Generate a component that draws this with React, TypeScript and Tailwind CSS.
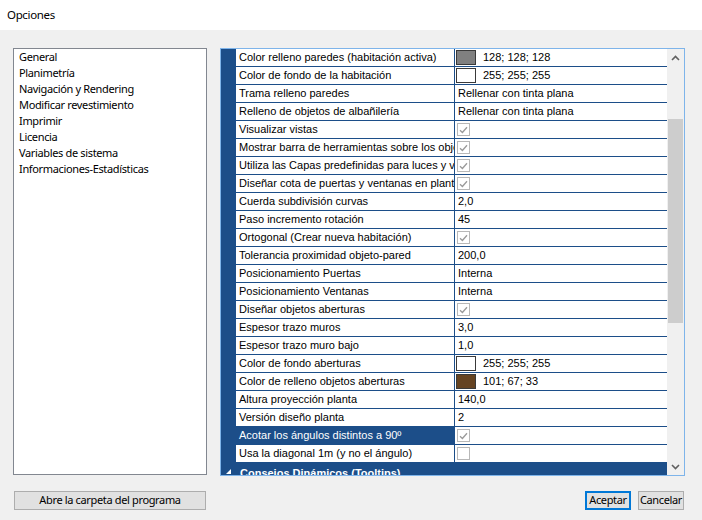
import React from "react";

type Row =
  | { name: string; kind: "text"; value: string }
  | { name: string; kind: "color"; value: string; color: string }
  | { name: string; kind: "check"; checked: boolean };

const rows: (Row & { selected?: boolean })[] = [
  { name: "Color relleno paredes (habitación activa)", kind: "color", value: "128; 128; 128", color: "#808080" },
  { name: "Color de fondo de la habitación", kind: "color", value: "255; 255; 255", color: "#ffffff" },
  { name: "Trama relleno paredes", kind: "text", value: "Rellenar con tinta plana" },
  { name: "Relleno de objetos de albañilería", kind: "text", value: "Rellenar con tinta plana" },
  { name: "Visualizar vistas", kind: "check", checked: true },
  { name: "Mostrar barra de herramientas sobre los objetos", kind: "check", checked: true },
  { name: "Utiliza las Capas predefinidas para luces y vistas", kind: "check", checked: true },
  { name: "Diseñar cota de puertas y ventanas en planta", kind: "check", checked: true },
  { name: "Cuerda subdivisión curvas", kind: "text", value: "2,0" },
  { name: "Paso incremento rotación", kind: "text", value: "45" },
  { name: "Ortogonal (Crear nueva habitación)", kind: "check", checked: true },
  { name: "Tolerancia proximidad objeto-pared", kind: "text", value: "200,0" },
  { name: "Posicionamiento Puertas", kind: "text", value: "Interna" },
  { name: "Posicionamiento Ventanas", kind: "text", value: "Interna" },
  { name: "Diseñar objetos aberturas", kind: "check", checked: true },
  { name: "Espesor trazo muros", kind: "text", value: "3,0" },
  { name: "Espesor trazo muro bajo", kind: "text", value: "1,0" },
  { name: "Color de fondo aberturas", kind: "color", value: "255; 255; 255", color: "#ffffff" },
  { name: "Color de relleno objetos aberturas", kind: "color", value: "101; 67; 33", color: "#654321" },
  { name: "Altura proyección planta", kind: "text", value: "140,0" },
  { name: "Versión diseño planta", kind: "text", value: "2" },
  { name: "Acotar los ángulos distintos a 90º", kind: "check", checked: true, selected: true },
  { name: "Usa la diagonal 1m (y no el ángulo)", kind: "check", checked: false },
];

const menu = [
  "General",
  "Planimetría",
  "Navigación y Rendering",
  "Modificar revestimiento",
  "Imprimir",
  "Licencia",
  "Variables de sistema",
  "Informaciones-Estadísticas",
];

function Check({ checked }: { checked: boolean }) {
  return (
    <div className="ml-[2px] w-[13px] h-[13px] border border-[#b8b8b8] bg-white flex items-center justify-center">
      {checked && (
        <svg width="9" height="8" viewBox="0 0 9 8">
          <path d="M1 4.2 L3.4 6.5 L8 1.2" fill="none" stroke="#9a9a9a" strokeWidth="1.3" />
        </svg>
      )}
    </div>
  );
}

function Value({ row }: { row: Row }) {
  if (row.kind === "check") return <Check checked={row.checked} />;
  if (row.kind === "color")
    return (
      <div className="flex items-center">
        <div className="ml-[1px] w-[20px] h-[15px] border border-[#3a3a3a]" style={{ backgroundColor: row.color }} />
        <span className="ml-[7px]">{row.value}</span>
      </div>
    );
  return <span className="pl-[3px]">{row.value}</span>;
}

export default function App() {
  const ui = { fontFamily: '"Noto Sans", "Open Sans", sans-serif' };
  const grid = { fontFamily: '"Liberation Sans", Arial, sans-serif', letterSpacing: "0px" };
  return (
    <div className="w-[702px] h-[520px] bg-[#f0f0f0] flex flex-col overflow-hidden text-black tracking-[-0.35px]" style={ui}>
      <div className="h-[30px] bg-white flex items-center pl-[7px] text-[11.5px]">Opciones</div>
      <div className="flex pt-[18px]">
        <div className="ml-[13px] w-[194px] h-[427px] bg-white border border-[#828790] pl-[5px] text-[11px] leading-[16px]">
          {menu.map((m) => (
            <div key={m}>{m}</div>
          ))}
        </div>
        <div className="ml-[13px] w-[465px] h-[428px] border border-[#7eb4ea] bg-white flex overflow-hidden" style={grid}>
          <div className="w-[446px] flex flex-col text-[11px]">
            {rows.map((r) => (
              <div key={r.name} className="flex h-[18px] border-b border-[#1c4e89] shrink-0">
                <div className="w-[15px] bg-[#1c4e89] shrink-0" />
                <div
                  className={`w-[218px] shrink-0 pl-[3px] flex items-center overflow-hidden whitespace-nowrap ${
                    r.selected ? "bg-[#1c4e89] text-white" : ""
                  }`}
                >
                  {r.name}
                </div>
                <div className="w-[1px] bg-[#1c4e89] shrink-0" />
                <div className="flex-1 flex items-center whitespace-nowrap">
                  <Value row={r} />
                </div>
              </div>
            ))}
            <div className="h-[18px] shrink-0 bg-[#1c4e89] text-white font-bold flex items-center">
              <svg width="16" height="18" viewBox="0 0 16 18" className="shrink-0">
                <path d="M5 11 L10 11 L10 6 Z" fill="#ffffff" />
              </svg>
              <span className="ml-[3px] pt-[2px]">Conseios Dinámicos (Tooltips)</span>
            </div>
          </div>
          <div className="w-[17px] bg-[#f0f0f0] flex flex-col shrink-0">
            <div className="h-[17px] flex items-center justify-center shrink-0">
              <svg width="9" height="6" viewBox="0 0 9 6">
                <path d="M1 5 L4.5 1.5 L8 5" fill="none" stroke="#606060" strokeWidth="1.6" />
              </svg>
            </div>
            <div className="h-[53px] shrink-0" />
            <div className="h-[204px] ml-[1px] w-[15px] bg-[#cdcdcd] shrink-0" />
            <div className="flex-1" />
            <div className="h-[17px] flex items-center justify-center shrink-0">
              <svg width="9" height="6" viewBox="0 0 9 6">
                <path d="M1 1 L4.5 4.5 L8 1" fill="none" stroke="#606060" strokeWidth="1.6" />
              </svg>
            </div>
          </div>
        </div>
      </div>
      <div className="flex mt-[15px] text-[11px]">
        <button className="ml-[14px] w-[192px] h-[19px] bg-[#e1e1e1] border border-[#adadad] flex items-center justify-center">
          Abre la carpeta del programa
        </button>
        <button className="ml-[379px] w-[46px] h-[19px] bg-[#e1e1e1] border-2 border-[#0078d7] flex items-center justify-center">
          Aceptar
        </button>
        <button className="ml-[7px] w-[46px] h-[19px] bg-[#e1e1e1] border border-[#adadad] flex items-center justify-center">
          Cancelar
        </button>
      </div>
    </div>
  );
}
